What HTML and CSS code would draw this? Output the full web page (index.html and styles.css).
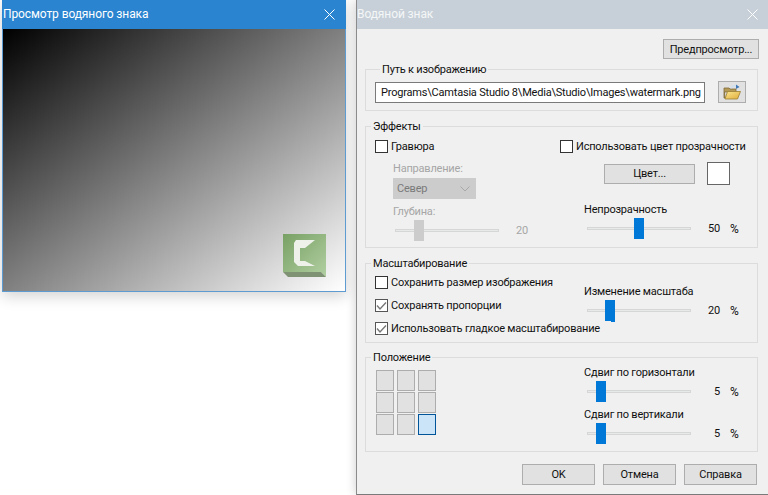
FILE: index.html
```html
<!DOCTYPE html>
<html lang="ru">
<head>
    <meta charset="UTF-8">
    <meta name="viewport" content="width=device-width, initial-scale=1.0">
    <title>Водяной знак</title>
    <link rel="stylesheet" href="styles.css">
</head>
<body>

    <!-- Окно предпросмотра -->
    <div class="window preview-window">
        <div class="titlebar titlebar-active">
            <span>Просмотр водяного знака</span>
            <svg class="close-icon" viewBox="0 0 11 11"><path d="M.5.5l10 10M10.500.5l-10 10"/></svg>
        </div>
        <div class="preview-canvas">
            <svg class="watermark" viewBox="0 0 44 44">
                <defs>
                    <linearGradient id="wm" x1="0" y1="0" x2="1" y2="1">
                        <stop offset="0" stop-color="#78a064"/>
                        <stop offset="1" stop-color="#b2d0a2"/>
                    </linearGradient>
                </defs>
                <path d="M0 0H43V43L38 38H0z" fill="url(#wm)"/>
                <path d="M0 38H38L43 43H5z" fill="#7f9273"/>
                <path d="M13 6H32L22 14H17V27H22L32 32H15L11 28V9z" fill="#eef1ea"/>
            </svg>
        </div>
    </div>

    <!-- Диалог -->
    <div class="window dialog">
        <div class="titlebar titlebar-inactive">
            <span>Водяной знак</span>
            <svg class="close-icon" viewBox="0 0 11 11"><path d="M.5.5l10 10M10.500.5l-10 10"/></svg>
        </div>

        <div class="dialog-body">
            <div class="preview-row">
                <button class="btn btn-preview">Предпросмотр...</button>
            </div>

            <fieldset class="group group-path">
                <legend>Путь к изображению</legend>
                <div class="path-row">
                    <div class="path-input">Programs\Camtasia Studio 8\Media\Studio\Images\watermark.png</div>
                    <button class="btn btn-folder">
                        <svg viewBox="0 0 18 16" width="18" height="16">
                            <defs>
                                <linearGradient id="folder" x1="0" y1="0" x2="1" y2="1">
                                    <stop offset="0" stop-color="#fbe68f"/>
                                    <stop offset="1" stop-color="#e0ac3a"/>
                                </linearGradient>
                            </defs>
                            <path d="M1 4h5l1 1h6v3H1.500L2 14H1z" fill="#b59a55" stroke="#7d6a3a" stroke-width=".8"/>
                            <path d="M2 15L4.500 7.500H17.500L14.500 15z" fill="url(#folder)" stroke="#9a7d33" stroke-width=".8"/>
                            <path d="M8 4C9.500 1.500 12 1 14 2.500" fill="none" stroke="#cfe0ef" stroke-width="1.500"/>
                            <path d="M13 .5L16.500 3 13 5z" fill="#3f78b5"/>
                        </svg>
                    </button>
                </div>
            </fieldset>

            <fieldset class="group group-effects">
                <legend>Эффекты</legend>
                <div class="cols">
                    <div class="col-left">
                        <label class="check"><span class="box"></span>Гравюра</label>
                        <div class="sub disabled">
                            <div class="caption caption-dir">Направление:</div>
                            <div class="select">Север
                                <svg viewBox="0 0 10 6" width="10" height="6"><path d="M.5.5L5 5 9.500.5" fill="none" stroke="#a8a8a8"/></svg>
                            </div>
                            <div class="caption caption-depth">Глубина:</div>
                            <div class="slider-row">
                                <div class="slider"><span class="thumb thumb-off" style="left: 18px"></span></div>
                                <span class="value">20</span>
                            </div>
                        </div>
                    </div>
                    <div class="col-right">
                        <label class="check check-alpha"><span class="box"></span>Использовать цвет прозрачности</label>
                        <div class="color-row">
                            <button class="btn btn-color">Цвет...</button>
                            <span class="swatch"></span>
                        </div>
                        <div class="caption caption-opacity">Непрозрачность</div>
                        <div class="slider-row">
                            <div class="slider"><span class="thumb" style="left: 46px"></span></div>
                            <span class="value">50</span><span class="unit">%</span>
                        </div>
                    </div>
                </div>
            </fieldset>

            <fieldset class="group group-scale">
                <legend>Масштабирование</legend>
                <div class="cols">
                    <div class="col-left">
                        <label class="check"><span class="box"></span>Сохранить размер изображения</label>
                        <label class="check"><span class="box checked"><svg viewBox="0 0 11 11"><path d="M1 5.500l3 3.500L10 2.500" fill="none" stroke="#777" stroke-width="1.400"/></svg></span>Сохранять пропорции</label>
                        <label class="check"><span class="box checked"><svg viewBox="0 0 11 11"><path d="M1 5.500l3 3.500L10 2.500" fill="none" stroke="#777" stroke-width="1.400"/></svg></span>Использовать гладкое масштабирование</label>
                    </div>
                    <div class="col-right col-scale">
                        <div class="caption">Изменение масштаба</div>
                        <div class="slider-row">
                            <div class="slider"><span class="thumb thumb-notch" style="left: 17px"></span></div>
                            <span class="value">20</span><span class="unit">%</span>
                        </div>
                    </div>
                </div>
            </fieldset>

            <fieldset class="group group-position">
                <legend>Положение</legend>
                <div class="cols">
                    <div class="col-left">
                        <div class="cells">
                            <span class="cell"></span><span class="cell"></span><span class="cell"></span>
                            <span class="cell"></span><span class="cell"></span><span class="cell"></span>
                            <span class="cell"></span><span class="cell"></span><span class="cell cell-active"></span>
                        </div>
                    </div>
                    <div class="col-right col-offset">
                        <div class="caption">Сдвиг по горизонтали</div>
                        <div class="slider-row">
                            <div class="slider"><span class="thumb" style="left: 8px"></span></div>
                            <span class="value">5</span><span class="unit">%</span>
                        </div>
                        <div class="caption caption-second">Сдвиг по вертикали</div>
                        <div class="slider-row">
                            <div class="slider"><span class="thumb" style="left: 8px"></span></div>
                            <span class="value">5</span><span class="unit">%</span>
                        </div>
                    </div>
                </div>
            </fieldset>

            <div class="footer">
                <button class="btn btn-footer">OK</button>
                <button class="btn btn-footer">Отмена</button>
                <button class="btn btn-footer">Справка</button>
            </div>
        </div>
    </div>

</body>
</html>
```

FILE: styles.css
```css
* {
    box-sizing: border-box;
}

html, body {
    height: 100%;
}

body {
    margin: 0;
    background-color: #fff;
    font-family: Roboto, Arial, sans-serif;
    font-size: 11px;
    letter-spacing: -0.2px;
    color: #111;
    overflow: hidden;
}

.window {
    position: absolute;
    top: 0;
}

.preview-window {
    left: 2px;
    width: 344px;
    height: 292px;
    border: 1px solid #5d9bd0;
    border-top: none;
    box-shadow: 0 4px 14px rgba(0, 0, 0, 0.18);
}

.dialog {
    left: 356px;
    width: 412px;
    height: 495px;
    background-color: #f0f0f0;
    border-left: 1px solid #8b8b8b;
    border-bottom: 1px solid #7a7a7a;
    box-shadow: 0 0 10px rgba(0, 0, 0, 0.2);
}

.titlebar {
    height: 29px;
    display: flex;
    align-items: center;
    justify-content: space-between;
    padding-bottom: 1px;
    font-size: 12px;
    letter-spacing: -0.1px;
}

.titlebar-active {
    background-color: #2a84cf;
    color: #fff;
    margin: 0 -1px;
    padding-left: 1px;
    padding-right: 11px;
}

.titlebar-inactive {
    background-color: #c7d0d8;
    color: #f4f6f7;
    padding-right: 10px;
}

.close-icon {
    width: 11px;
    height: 11px;
    fill: none;
    stroke: #fff;
    stroke-width: 1;
}

.preview-canvas {
    height: 262px;
    position: relative;
    background: linear-gradient(to bottom right, #000 0%, #808080 50%, #fff 100%);
}

.watermark {
    position: absolute;
    left: 280px;
    top: 205px;
    width: 44px;
    height: 44px;
}

.dialog-body {
    padding: 10px 10px 0 8px;
}

.preview-row {
    display: flex;
    justify-content: flex-end;
    height: 20px;
    margin-right: -1px;
}

.btn {
    font-family: inherit;
    font-size: inherit;
    letter-spacing: inherit;
    color: #111;
    background-color: #e1e1e1;
    border: 1px solid #adadad;
    padding: 0;
}

.btn-preview {
    width: 96px;
    height: 20px;
}

.group {
    margin: 0;
    padding: 0;
    border: 1px solid #dcdcdc;
    min-width: 0;
    position: relative;
}

.group legend {
    padding: 0 2px;
    margin-left: 5px;
    line-height: 15px;
    height: 14px;
}

.group-path {
    margin-top: 3px;
    height: 49px;
    padding: 5px 10px 0 9px;
}

.path-row {
    display: flex;
    align-items: center;
    gap: 13px;
}

.path-input {
    width: 330px;
    height: 21px;
    line-height: 19px;
    background-color: #fff;
    border: 1px solid #7a7a7a;
    padding-left: 5px;
    white-space: nowrap;
    overflow: hidden;
}

.btn-folder {
    width: 28px;
    height: 22px;
    display: flex;
    align-items: center;
    justify-content: center;
}

.group-effects {
    margin-top: 8px;
    height: 129px;
}

.group-scale {
    margin-top: 8px;
    height: 87px;
}

.group-position {
    margin-top: 7px;
    height: 102px;
}

.cols {
    display: flex;
}

.col-left {
    width: 185px;
    flex: none;
    padding-left: 9px;
}

.col-right {
    flex: 1;
}

.check {
    display: flex;
    align-items: center;
    gap: 3px;
    height: 14px;
    white-space: nowrap;
}

.box {
    width: 13px;
    height: 13px;
    border: 1px solid #333;
    background-color: #fff;
    flex: none;
    display: block;
}

.box svg {
    display: block;
    width: 11px;
    height: 11px;
}

.box.checked {
    border-color: #555;
}

.group-effects .check {
    margin-top: 6px;
}

.sub {
    padding-left: 18px;
}

.disabled {
    color: #a6a6a6;
}

.caption {
    height: 16px;
    line-height: 16px;
    white-space: nowrap;
}

.caption-dir {
    margin-top: 8px;
}

.select {
    width: 83px;
    height: 21px;
    margin-top: 1px;
    background-color: #ccc;
    padding: 0 6px 0 4px;
    display: flex;
    align-items: center;
    justify-content: space-between;
    color: #7a7a7a;
}

.caption-depth {
    margin-top: 5px;
}

.slider-row {
    display: flex;
    align-items: center;
    height: 21px;
}

.slider {
    width: 104px;
    height: 3px;
    margin-left: 2px;
    background-color: #e7eaea;
    border: 1px solid #d6d6d6;
    position: relative;
}

.thumb {
    position: absolute;
    top: -10px;
    width: 10px;
    height: 21px;
    background-color: #0078d7;
}

.thumb-off {
    background-color: #ccc;
}

.thumb-notch::after {
    content: "";
    position: absolute;
    left: 6px;
    bottom: -1px;
    width: 4px;
    height: 1px;
    background-color: #0078d7;
}

.value {
    width: 12px;
    margin-left: 17px;
    text-align: right;
    white-space: nowrap;
}

.unit {
    margin-left: 10px;
    font-size: 12px;
}

.check-alpha {
    margin-left: 9px;
}

.color-row {
    display: flex;
    align-items: center;
    gap: 12px;
    margin: 9px 0 0 53px;
}

.btn-color {
    width: 91px;
    height: 20px;
}

.swatch {
    width: 23px;
    height: 23px;
    background-color: #fff;
    border: 1px solid #666;
}

.caption-opacity {
    margin-top: 17px;
}

.col-right .slider {
    margin-left: 36px;
}

.col-right .caption {
    padding-left: 33px;
}

.group-scale .check {
    margin-top: 9px;
}

.group-scale .check:first-child {
    margin-top: 5px;
}

.col-scale {
    padding-top: 14px;
}

.cells {
    display: grid;
    grid-template-columns: repeat(3, 18px);
    grid-auto-rows: 21px;
    gap: 1px 3px;
    margin: 6px 0 0 1px;
}

.cell {
    background-color: #e1e1e1;
    border: 1px solid #adadad;
}

.cell-active {
    background-color: #cce4f7;
    border-color: #005499;
}

.col-offset {
    padding-top: 1px;
}

.caption-second {
    margin-top: 5px;
}

.footer {
    display: flex;
    justify-content: flex-end;
    gap: 8px;
    margin: 12px 1px 0 0;
}

.btn-footer {
    width: 73px;
    height: 21px;
}
```
